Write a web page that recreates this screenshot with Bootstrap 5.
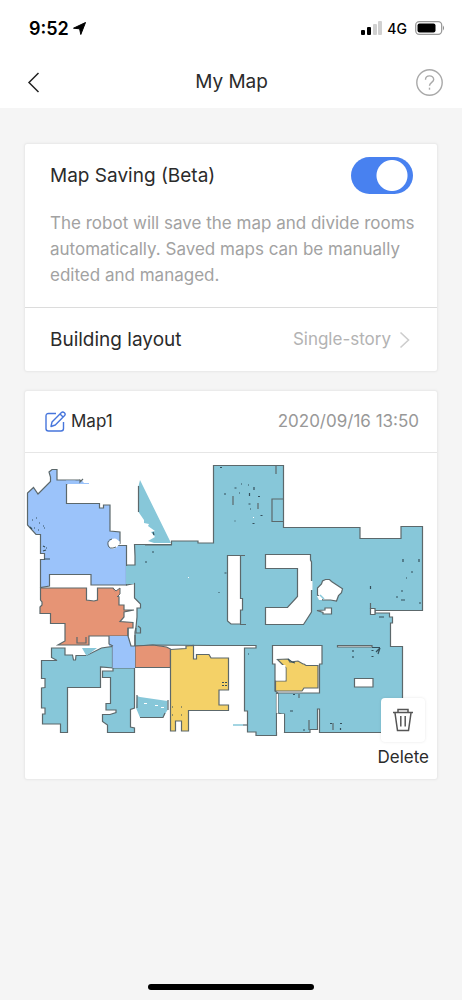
<!DOCTYPE html>
<html lang="en">
<head>
<meta charset="utf-8">
<meta name="viewport" content="width=device-width, initial-scale=1">
<title>My Map</title>
<link href="https://cdn.jsdelivr.net/npm/bootstrap@5.3.0/dist/css/bootstrap.min.css" rel="stylesheet">
<style>
  body { font-family: Inter, "Liberation Sans", sans-serif; background: #f5f5f5; color: #2b2b2b; }
  .status-bar { height: 56px; padding: 0 17px 0 29px; color: #000; }
  .clock { font-size: 18px; font-weight: 600; }
  .carrier { font-size: 14px; font-weight: 500; }
  .title-bar { height: 52px; padding: 0 19px 0 20px; }
  .title-text { font-size: 19px; line-height: 24px; font-weight: 400; }
  .icon-btn { padding: 0; border: 0; line-height: 0; }
  main { padding: 35px 24px 24px; }
  .panel { background: #fff; border: 1px solid #ebebeb; border-radius: 3px; box-shadow: 0 0 3px rgba(0,0,0,.05); }
  .settings { margin-bottom: 18px; }
  .saving { padding: 13px 16px 19px 25px; border-bottom: 1px solid #dcdcdc; }
  .saving-head { padding-right: 8px; }
  .row-label { font-size: 19px; line-height: 24px; }
  .hint { font-size: 17px; line-height: 26px; color: #a2a2a2; margin-top: 16px; }
  .form-check-input.toggle { width: 62px; height: 37px; margin: 0; border: 0; border-radius: 19px; }
  .form-check-input.toggle:checked { background: #4881f0 radial-gradient(circle at 41px 50%, #fff 15px, transparent 16px); }
  .layout-row { height: 63px; padding: 0 27px 0 25px; color: inherit; }
  .layout-value { font-size: 17px; color: #b3b3b3; }
  .map-head { height: 62px; padding: 0 18px 0 20px; border-bottom: 1px solid #e6e6e6; }
  .map-name { font-size: 17px; color: #2b2b2b; }
  .map-date { font-size: 17px; color: #989898; }
  .delete-btn { right: 8px; bottom: 10px; font-size: 17px; line-height: 24px; color: #2b2b2b; }
  .delete-icon { width: 44px; height: 44px; background: #fff; border-radius: 4px; box-shadow: 0 0 3px rgba(0,0,0,.1); margin-bottom: 3px; }
  .home-bar { width: 36%; height: 6px; border-radius: 3px; background: #000; margin-bottom: 10px; }
</style>
</head>
<body class="d-flex flex-column min-vh-100">
<header class="bg-white">
  <div class="status-bar d-flex align-items-center justify-content-between">
    <div class="d-flex align-items-center gap-1">
      <span class="clock">9:52</span>
      <svg width="13" height="13" viewBox="0 0 13 13" aria-hidden="true"><path d="M12.5.5 7.8 12.5 6.6 6.8.5 6.2Z" stroke="#000" stroke-linejoin="round"/></svg>
    </div>
    <div class="d-flex align-items-center gap-1">
      <svg width="22" height="14" viewBox="0 0 22 14" aria-hidden="true"><rect y="9" width="4" height="5" rx="1"/><rect x="6" y="6" width="4" height="8" rx="1"/><g fill="#d0d0d0"><rect x="12" y="3" width="4" height="11" rx="1"/><rect x="17" y="0" width="4" height="14" rx="1"/></g></svg>
      <span class="carrier">4G</span>
      <svg class="ms-1" width="30" height="14" viewBox="0 0 30 14" aria-hidden="true"><rect x=".7" y=".7" width="26" height="12.6" rx="3.5" fill="none" stroke="#999" stroke-width="1.3"/><rect x="2.5" y="2.5" width="18" height="9" rx="2"/><path d="M28 4.5q2 2.5 0 5Z" fill="#888"/></svg>
    </div>
  </div>
  <nav class="title-bar d-flex align-items-center justify-content-between" aria-label="Page">
    <button type="button" class="btn icon-btn" aria-label="Back"><svg width="27" height="27" viewBox="0 0 27 27" fill="none" stroke="#222" stroke-width="1.5"><path d="M18.500 4 9 13.500 18.500 23"/></svg></button>
    <h1 class="title-text m-0">My Map</h1>
    <button type="button" class="btn icon-btn" aria-label="Help"><svg width="27" height="27" viewBox="0 0 27 27" fill="none" stroke="#a9a9a9" stroke-width="1.4"><circle cx="13.5" cy="13.5" r="12.7"/><path d="M9.500 10.700c0-5 8.200-5 8.200-.2 0 2.900-4.200 2.900-4.200 6.200"/><path d="M13.500 18.700v2"/></svg></button>
  </nav>
</header>

<main class="flex-grow-1">
  <section class="panel settings">
    <div class="saving">
      <div class="saving-head d-flex align-items-center justify-content-between">
        <label class="row-label" for="saving">Map Saving (Beta)</label>
        <input class="form-check-input toggle" type="checkbox" role="switch" id="saving" checked>
      </div>
      <p class="hint mb-0">The robot will save the map and divide rooms automatically. Saved maps can be manually edited and managed.</p>
    </div>
    <a href="#" class="layout-row d-flex align-items-center justify-content-between text-decoration-none">
      <span class="row-label">Building layout</span>
      <span class="layout-value d-flex align-items-center gap-2">Single-story
        <svg width="11" height="18" viewBox="0 0 11 18" fill="none" stroke="#cdcdcd" stroke-width="1.6" aria-hidden="true"><path d="M1.500 1.500 9.500 9l-8 7.500"/></svg></span>
    </a>
  </section>

  <section class="panel position-relative">
    <div class="map-head d-flex align-items-center justify-content-between">
      <button type="button" class="btn p-0 border-0 map-name d-flex align-items-center gap-1">
        <svg width="22" height="21" viewBox="0 0 22 21" fill="none" stroke="#4776dc" stroke-width="1.400" stroke-linejoin="round" aria-hidden="true"><path d="M11 2.500H3.500Q1 2.500 1 5v12.500Q1 20 3.500 20H16q2.500 0 2.500-2.500V11"/><path d="M6 15.500 7 11 16.200 1.800q1.500-1.500 3.200 0 1.500 1.500 0 3L10.300 14Zm9-12.500 3.300 3.200"/></svg>
        Map1</button>
      <span class="map-date">2020/09/16 13:50</span>
    </div>
    <svg class="d-block w-100" viewBox="25 453 412 326" role="img" aria-label="Floor map">
      <g stroke="#5c686b" stroke-width="1.200">
        <path fill="#87c7d9" d="M126.500 565H135V556L134.500 544.500H171.500V541H198V543H213.500V465.500H283.500V527.500H360V538.500H401V526.500H422.500V610.500H375V613H389.500V617H392.500V623H390.500V646.500H402.500V732.500H319.500V709H317.500V729.500H310V732.500H284.500V714H282L278 713V693H276.500V735.500H256V732H247.500V711H244.500V648H256V645.500H209.500L153 645 135 646V632L136 627 137 617V608H140.500V604L134.500 598V583.500L126.500 585Z"/>
        <path fill="#87c7d9" d="M51.500 648H65V655H72.500L73.500 660H75.500L76 655.500H86.500L101.500 648 112.500 646.500V668H134.500V708L130.500 709.500V727L134.500 728V732.500H107.500V725L102.500 721.500V714.500H110L116 712.500V710H106V703.500H110.500V677.500H102.500V671H113V668L100.500 667V687.500H67.500V732.500H60.500V724H42.500V714H45V708H41.500V688L45 687.500V678.500H41.500V660.500H57L51.500 657.500Z"/>
        <path fill="#9bc3fa" d="M49 472 52 469.500H57V480H80L66.500 484V503.500H99.500V508H103.500V505H110V531L120 532V543.500L116 545.500H126.500V585H91V574.500H49.500V586L40.500 587.500V559.500H44.500V553.500H40.500V534.500H36L27.500 525V493L33.500 487.500 38 494 50.500 481.500V477Z"/>
        <path fill="#e69475" d="M40.500 588H86.500V600L94 601 97.500 600V588H113L119 597V605H124V610H134L124 612V617L120 621.500 133 622.500V628H128V636H89V645H58L65 641V623.500H50.500V613.500H40V607L42 605V602L40.500 600Z"/>
        <path fill="#e69475" d="M135 646 153 645 166.500 647 170.500 649V667.500H135Z"/>
        <path fill="#f4d167" d="M170.500 649.500 186 648.500V646L193.500 645.500V659H196.500V654.500H209L211 658H228.500V690H219V705H228.500V710.500H188.500V731H181.500V721H175.500V731H170.500Z"/>
        <g fill="#fff">
          <path d="M227.500 555.500H240.500V598.500H242.500V610H240.500V624H231L227.500 621Z"/>
          <path d="M265.500 554.500H310.500V560L311.500 562V612L303.500 624.500H265.500V607.500H287.500L297.500 596.500V568.500H265.500Z"/>
          <path d="m317.500 588 4-4 1-3 3-1.500h4l2 2 11 7.200-1 4-3 3-2 5.300-6-1-8 0-5-5Z"/>
          <path d="m317 610.500 8-.5v-2h6.500v6H323v-1.500Z"/>
          <path d="M370.500 608.500H375V614.500H370.500Z"/>
          <path d="M272.500 645.500H322V664H319.500V693H278L275 691V664H272.500Z"/>
          <path d="M337.500 645.500H372V647H337.500Z"/>
          <path d="M354.500 678.500H373V687H354.500Z"/>
        </g>
        <path fill="none" d="M283.500 499H272V521.500H283.500M276 466V474M240.500 555.500H245M240 624.500H246M370.500 603V609M233 496v9M258 503v6"/>
        <path fill="#f4d167" d="M286 668 277.500 659.500 288 659 290 662 298 661 303 664H304L306 665.500H318V688H304L302 691H275.500V681H286Z"/>
      </g>
      <path fill="#fff" d="M277 665H285.500V680.500H276ZM276.500 694H278V713H276.500ZM282 714H284V732H277V714Z"/>
      <path fill="#87c7d9" d="M140 480 171 543H154L148 541 155 537 151 532 155 531 148 526 149 524 144 523V520L138.500 512V486Z M137 696 140 697 167.500 701V710L163 717.500H140L136 708Z M82 648H97L86.500 656Z M126 566H134V584H126Z"/>
      <path fill="#9bc3fa" d="M66 480.500H82L84 483H89V484H66ZM109 636H128.500L131 646H135V668H112.500V646H109Z"/>
      <path fill="none" stroke="#5c686b" stroke-width="1.200" d="M138.500 486V512M140 717.500H163L165 713M168 700V710M137 695V708M109 636V644L113 646M128 628V636L131 646H135M135 645.500V635M80 479.500V482L83 479M77 637V643H86V637M136 628V633H140.500V628L138 626M172 545H145M299 694V698M309 720V730M333 723V730"/>
      <path fill="#e69475" stroke="#5c686b" d="M113 588 116 591 120 588V594L117 597"/>
      <path fill="#fff" d="M112 539Q117 537 120 543L117 547Q110 552 108 543ZM116 541H119.500V545H116ZM144 703h3v1h-3ZM155 705h3v1h-3ZM161 707h3v1h-3ZM317 596h5v4h-3ZM310 581h2.500v9H310ZM253 517h1v1h-1ZM188 577h1v1h-1Z"/>
      <path fill="none" stroke="#5c686b" d="M112 539Q107 540 108 545T116 547"/>
      <path fill="none" stroke="#87c7d9" stroke-width="1.500" d="M233 725H243M320 595l4 4"/>
      <path fill="none" stroke="#344f5b" stroke-width="1.200" d="M32 520h1M36 518h1M39 523h1M43 526h1M34 528h1M38 530h1M44 528h1M30 527l2 2M43 546l2 1M46 548h1M43 551l3-1M44 559h6M153 532l1 3M152 552h2M145 562h2M241 484h1M248 485h1M234.500 488h2M254 487v3M224 494h2M239 493h1M249.500 493v3M258 496.500h2M248.500 504h2M250 509h1M260.500 515.500h2M234.500 521h1M252.500 523.500h2M220 467.500h2M224.500 573h2M218.500 592.500h1"/>
      <path fill="none" stroke="#344f5b" stroke-width="1.200" d="M403 559v3M419 559v3M411 572h2M406 578h1M401 591h2M396 597h2M401 600h4M419 603h2M370.500 586v3M379 617h5M353 650v2M353 656v2M371.500 650.500h2M371.500 656.500h2M376 652l4-4-2 6M372 647.500h8M330 723.500h2M340 723.500h2M340.500 728v2M222 682.500h2m1 0h2M222 685.500h2m1 0h2M172 707h1M181 707h1M172 715h1M181 715h1M293 694.500h2M290 711h3M303 730h2M248 654h1M243 725h4M288 659l4 3 3 1"/>
    </svg>
    <button type="button" class="btn p-0 border-0 delete-btn position-absolute d-flex flex-column align-items-center">
      <span class="delete-icon d-flex align-items-center justify-content-center">
        <svg width="22" height="24" viewBox="0 0 22 24" fill="none" stroke="#555" stroke-width="1.500" aria-hidden="true"><path d="M1 4.500H21M6 4V1.500H16V4M3 5 5.500 22.500H16.500L19 5M8.800 8V18.500M13.200 8V18.500"/></svg>
      </span>
      Delete
    </button>
  </section>
</main>
<footer class="d-flex justify-content-center"><div class="home-bar"></div></footer>
<script src="https://cdn.jsdelivr.net/npm/bootstrap@5.3.0/dist/js/bootstrap.bundle.min.js"></script>
</body>
</html>
